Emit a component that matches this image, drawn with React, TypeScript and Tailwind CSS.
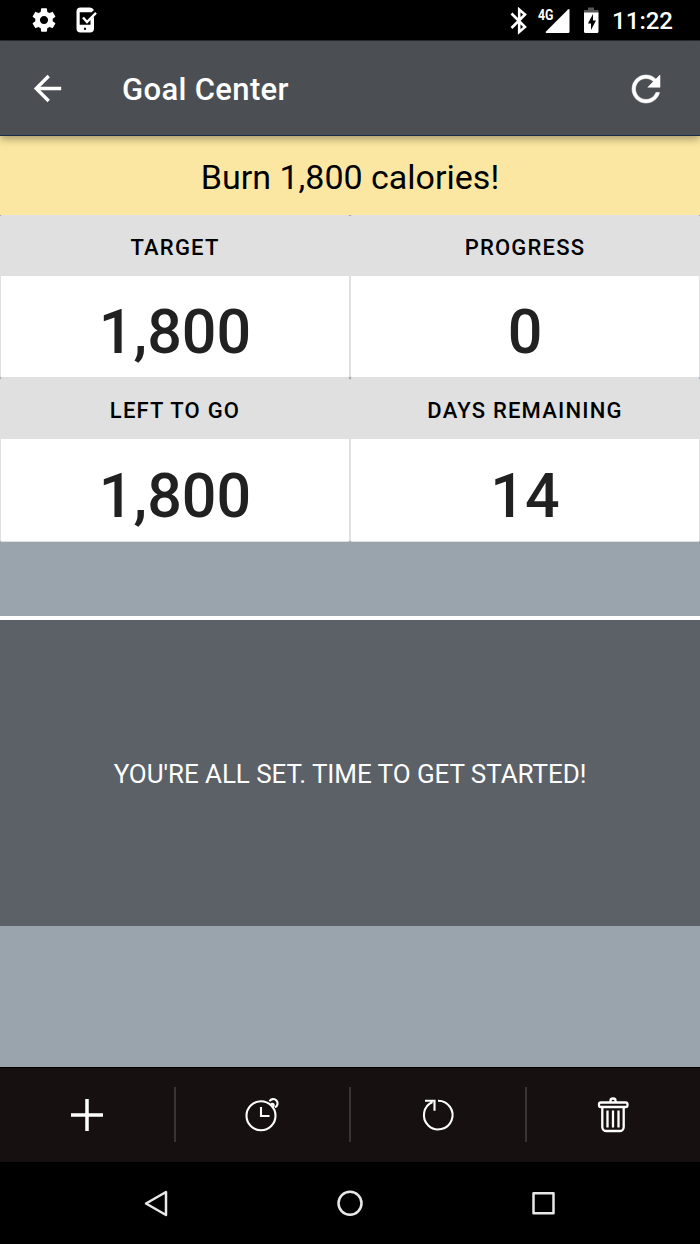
import React from 'react';

const stats = [
  { label: 'TARGET', value: '1,800' },
  { label: 'PROGRESS', value: '0' },
  { label: 'LEFT TO GO', value: '1,800' },
  { label: 'DAYS REMAINING', value: '14' },
];

const StatusBar = () => (
  <div className="flex h-[41px] items-center justify-between border-b border-[#2a2c2e] bg-black pr-[27px] pl-[30px] text-white">
    <div className="flex items-center gap-[14px]">
      <svg className="h-7 w-7" viewBox="0 0 24 24" fill="currentColor">
        <path d="M19.43 12.98c.04-.32.07-.64.07-.98s-.03-.66-.07-.98l2.11-1.65c.19-.15.24-.42.12-.64l-2-3.46c-.12-.22-.39-.3-.61-.22l-2.49 1c-.52-.4-1.08-.73-1.69-.98l-.38-2.65C14.46 2.18 14.25 2 14 2h-4c-.25 0-.46.18-.49.42l-.38 2.65c-.61.25-1.17.59-1.69.98l-2.49-1c-.23-.09-.49 0-.61.22l-2 3.46c-.13.22-.07.49.12.64l2.11 1.65c-.04.32-.07.65-.07.98s.03.66.07.98l-2.11 1.65c-.19.15-.24.42-.12.64l2 3.46c.12.22.39.3.61.22l2.49-1c.52.4 1.08.73 1.69.98l.38 2.65c.03.24.24.42.49.42h4c.25 0 .46-.18.49-.42l.38-2.65c.61-.25 1.17-.59 1.69-.98l2.49 1c.23.09.49 0 .61-.22l2-3.46c.12-.22.07-.49-.12-.64l-2.11-1.65zM12 15.5c-1.93 0-3.5-1.57-3.5-3.5s1.57-3.5 3.5-3.5 3.5 1.57 3.5 3.5-1.57 3.5-3.5 3.5z" />
      </svg>
      <svg className="h-7 w-7" viewBox="0 0 28 28">
        <path d="M8.500 1.500h9.500q2.500 0 4 2.500l-2.500 2.300H7.700v12.500H18.500v-5l3.500-3V22.500q0 4-4 4H8.500q-4 0-4-4V5.500q0-4 4-4z" fill="currentColor" />
        <path d="M11 11.500l4 4.500L24 6.800" fill="none" stroke="currentColor" strokeWidth="2.400" />
        <rect x="12" y="21.800" width="2" height="2" fill="#000" />
      </svg>
    </div>
    <div className="flex items-center pt-px">
      <svg className="h-7 w-[104px]" viewBox="504.500 7 104 28">
        <path d="M512 13.500l13.500 13.500-5.800 5V9.500l5.800 5L512 28" fill="none" stroke="currentColor" strokeWidth="2.600" />
        <text x="538.500" y="19.500" fill="currentColor" fontSize="14.500" fontWeight="700" textLength="15.500" lengthAdjust="spacingAndGlyphs" fontFamily="Roboto">4G</text>
        <path d="M568.500 9.500q1.500-1 1.500.5v21.500q0 1.500-1.500 1.500h-21.500q-1.500 0-.5-1.500z" fill="currentColor" />
        <path d="M588.500 7.500h6v2.500h4.500v3h-14.500v-3h4z" fill="#555" />
        <path d="M584.500 12.500h14.500v19q0 1.500-1.500 1.500h-11.500q-1.500 0-1.500-1.500z" fill="currentColor" />
        <path d="M593.500 14l-5 9.500h3v6.500l5-9.500h-3z" fill="#000" />
      </svg>
      <span className="ml-1 pt-px text-[24px] leading-none font-medium">11:22</span>
    </div>
  </div>
);

const AppBar = () => (
  <header className="relative z-10 flex h-[95px] items-center border-b border-[#182c45] bg-[#4b4f54] pt-px pr-[33px] pl-[27px] text-white shadow-[0_3px_8px_rgba(0,0,0,0.35)]">
    <svg className="h-[41px] w-[41px]" viewBox="0 0 24 24" fill="currentColor">
      <path d="M20 11H7.830l5.590-5.590L12 4l-8 8 8 8 1.410-1.410L7.830 13H20v-2z" />
    </svg>
    <h1 className="ml-[54px] flex-1 pt-[3px] text-[31px] font-medium tracking-[0.350px]">Goal Center</h1>
    <svg className="h-[42px] w-[42px]" viewBox="0 0 24 24" fill="currentColor">
      <path d="M17.650 6.350C16.200 4.900 14.210 4 12 4c-4.420 0-7.990 3.580-7.990 8s3.570 8 7.990 8c3.730 0 6.840-2.550 7.730-6h-2.080c-.820 2.330-3.040 4-5.650 4-3.310 0-6-2.690-6-6s2.690-6 6-6c1.660 0 3.140.690 4.220 1.780L13 11h7V4l-2.350 2.350z" stroke="currentColor" strokeWidth="0.300" />
    </svg>
  </header>
);

const AddIcon = () => (
  <svg className="h-10 w-10" viewBox="0 0 40 40" fill="none" stroke="currentColor" strokeWidth="3.500">
    <path d="M20 4v32M4 20h32" />
  </svg>
);

const ClockIcon = () => (
  <svg className="h-10 w-10" viewBox="0 0 40 40" fill="none" stroke="currentColor" strokeWidth="2.100">
    <circle cx="19" cy="20.700" r="14.500" />
    <path d="M19 12v9h8.500M27.500 6.300a4.300 4.300 0 1 1 5.500 6M28.500 10l1.500-1.200q2.300 0 1.500 2.200l-1.500 1.500" />
  </svg>
);

const ResetIcon = () => (
  <svg className="h-10 w-10" viewBox="0 0 40 40" fill="none" stroke="currentColor" strokeWidth="2.100">
    <path d="M20 5.800a14.300 14.300 0 1 1-5.500 1.200M7 5.800h9.500v10" />
  </svg>
);

const TrashIcon = () => (
  <svg className="h-10 w-10" viewBox="0 0 40 40" fill="none" stroke="currentColor" strokeWidth="2.300">
    <rect x="6" y="7.500" width="28.500" height="4.500" rx="1.800" />
    <path d="M17.500 7V5.500a2.500 2 0 0 1 5 0V7M9.300 12v20a4 4 0 0 0 4 4h13.400a4 4 0 0 0 4-4V12M14.500 15.500v17M20 15.500v17M25.500 15.500v17" />
  </svg>
);

const actions = [
  { id: 'add', icon: AddIcon },
  { id: 'schedule', icon: ClockIcon },
  { id: 'reset', icon: ResetIcon },
  { id: 'delete', icon: TrashIcon },
];

export default function App() {
  return (
    <div className="flex h-[1244px] w-[700px] flex-col overflow-hidden bg-[#9aa4ad] font-['Roboto',sans-serif]">
      <StatusBar />
      <AppBar />

      <div className="flex h-[79px] items-center justify-center bg-[#fbe7a1] pt-[3px] text-[34px] text-black">
        Burn 1,800 calories!
      </div>

      {/* Stats */}
      <div className="grid h-[327px] grid-cols-2 grid-rows-[163px_164px]">
        {stats.map((stat) => (
          <div key={stat.label} className="flex flex-col rounded-[2px] border border-[#e0e0e0] bg-white">
            <div className="flex h-[60px] items-center justify-center bg-[#e0e0e0] pt-[3px] text-[22px] font-[480] tracking-[1.200px] text-black">
              {stat.label}
            </div>
            <div className="flex flex-1 items-center justify-center pt-[12px] text-[61px] leading-none font-medium text-[#212121]">
              {stat.value}
            </div>
          </div>
        ))}
      </div>

      <div className="mt-[74px] flex h-[310px] items-center justify-center border-t-4 border-white bg-[#5c6067] pt-[3px] text-[26px] tracking-[-0.060px] text-white">
        YOU'RE ALL SET. TIME TO GET STARTED!
      </div>

      {/* Actions */}
      <div className="mt-auto flex h-[95px] items-center border-t border-black bg-[#161010] text-white">
        {actions.map(({ id, icon: Icon }, i) => (
          <React.Fragment key={id}>
            {i > 0 && <div className="mb-px h-[55px] w-0.5 bg-[#373535]" />}
            <button className="flex flex-1 justify-center">
              <Icon />
            </button>
          </React.Fragment>
        ))}
      </div>

      {/* System navigation */}
      <div className="flex h-[82px] items-center justify-center gap-[166px] bg-black text-[#e8e8e8]">
        <svg className="h-7 w-7" viewBox="0 0 28 28" fill="none" stroke="currentColor" strokeWidth="2.500" strokeLinejoin="round">
          <path d="M24 3v23L4 14.500z" />
        </svg>
        <svg className="h-7 w-7" viewBox="0 0 28 28" fill="none" stroke="currentColor" strokeWidth="2.500">
          <circle cx="14" cy="14.300" r="11.500" />
        </svg>
        <svg className="h-7 w-7" viewBox="0 0 28 28" fill="none" stroke="currentColor" strokeWidth="2.500" strokeLinejoin="round">
          <rect x="3.500" y="4.300" width="20" height="20" />
        </svg>
      </div>
    </div>
  );
}
